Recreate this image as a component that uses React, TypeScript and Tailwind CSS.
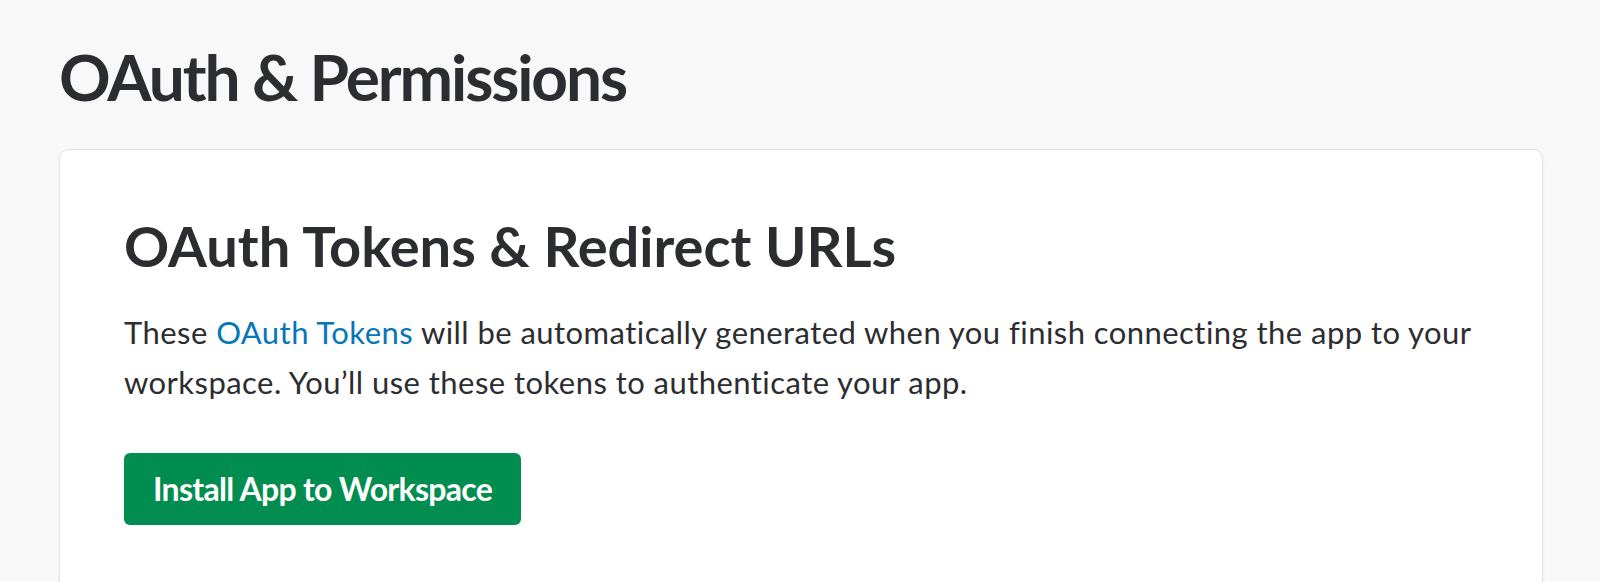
export default function App() {
  return (
    <div className="min-h-[582px] bg-[#f8f8f8] text-[#2c2d30] overflow-hidden" style={{ fontFamily: "Lato, 'Open Sans', sans-serif" }}>
      <div className="pl-[59px] pr-[57px]">
        <h1 className="pt-[39px] text-[64px] leading-[1.2] font-bold tracking-[-2.1px]">OAuth &amp; Permissions</h1>
        <div className="mt-[33px] bg-white border border-[#e4e4e4] rounded-[10px] shadow-[0_1px_3px_rgba(0,0,0,0.06)] pl-[64px] pr-[64px] pt-[62px] pb-[80px]">
          <h2 className="text-[56px] leading-[1.2] font-bold">OAuth Tokens &amp; Redirect URLs</h2>
          <p className="mt-[28px] text-[31px] leading-[50px] tracking-[0.45px]">
            These <a className="text-[#0576b9]">OAuth Tokens</a> will be automatically generated when you finish connecting the app to your workspace. You’ll use these tokens to authenticate your app.
          </p>
          <button className="mt-[46px] h-[72px] px-[29px] rounded-[6px] bg-[#018d4f] text-white text-[32px] font-bold tracking-[-0.7px]">
            Install App to Workspace
          </button>
        </div>
      </div>
    </div>
  );
}
